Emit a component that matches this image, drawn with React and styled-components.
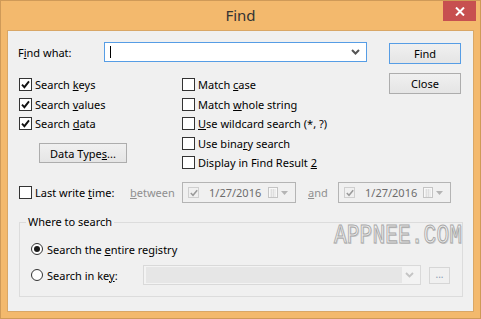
import React from 'react'
import styled, { createGlobalStyle } from 'styled-components'

const GlobalStyle = createGlobalStyle`
  html, body {
    margin: 0;
    padding: 0;
    background: #f3b96d;
  }
  body {
    font-family: 'Noto Sans', sans-serif;
    font-size: 11px;
    color: #000;
  }
  * {
    box-sizing: border-box;
  }
`

const Window = styled.div`
  width: 481px;
  height: 319px;
  background: #f3b96d;
  border: 1px solid #cf9a58;
  display: flex;
  flex-direction: column;
`

const TitleBar = styled.div`
  height: 29px;
  display: grid;
  grid-template-columns: 1fr auto 1fr;
  align-items: start;
`

const Title = styled.div`
  grid-column: 2;
  font-size: 15px;
  line-height: 29px;
  color: #333;
`

const CloseX = styled.div`
  grid-column: 3;
  justify-self: end;
  width: 33px;
  height: 20px;
  margin-right: 4px;
  background: #c75050;
  display: flex;
  align-items: center;
  justify-content: center;
`

const Client = styled.div`
  position: relative;
  margin: 0 6px;
  height: 282px;
  border: 1px solid #d9a766;
  background: #f0f0f0;
  padding: 11px 0 0 10px;
  display: flex;
  flex-direction: column;
`

const TopSection = styled.div`
  display: flex;
`

const MainCol = styled.div`
  width: 349px;
  display: flex;
  flex-direction: column;
`

const ButtonCol = styled.div`
  margin-left: 22px;
  padding-top: 1px;
  display: flex;
  flex-direction: column;
  gap: 9px;
`

const FindRow = styled.div`
  height: 20px;
  display: flex;
  align-items: center;
`

const FieldLabel = styled.span`
  width: ${p => p.w}px;
  margin-left: ${p => p.ml || 0}px;
  color: ${p => (p.disabled ? '#8f8f8f' : '#000')};
  white-space: nowrap;
  flex: none;
`

const TextInput = styled.div`
  width: 263px;
  height: 20px;
  border: 1px solid #569de5;
  background: #fff;
  display: flex;
  align-items: center;
  padding: 0 6px 0 5px;
`

const Caret = styled.span`
  width: 1px;
  height: 12px;
  background: #000;
`

const Chevron = styled.svg`
  margin-left: auto;
`

const OptionsGrid = styled.div`
  margin: 13px 0 0 1px;
  display: grid;
  grid-template-columns: 163px auto;
`

const OptionCol = styled.div`
  display: flex;
  flex-direction: column;
`

const CheckRow = styled.label`
  height: ${p => p.h || 19.5}px;
  display: flex;
  align-items: center;
  gap: 3px;
  white-space: nowrap;
  width: ${p => (p.w ? `${p.w}px` : 'auto')};
  flex: none;
`

const Box = styled.span`
  width: 13px;
  height: 13px;
  border: 1px solid #333;
  background: #fff;
  display: flex;
  align-items: center;
  justify-content: center;
  flex: none;
`

const Button = styled.button`
  width: ${p => p.w}px;
  height: ${p => p.h}px;
  margin: ${p => p.m || 0};
  padding: 0;
  border: 1px solid ${p => (p.primary ? '#569de5' : '#adadad')};
  background: linear-gradient(#f0f0f0, #e5e5e5);
  font: inherit;
  color: #000;
  flex: none;
`

const LastWriteRow = styled.div`
  margin: 9.5px 0 0 1px;
  height: 21px;
  display: flex;
  align-items: center;
`

const DateBox = styled.div`
  width: ${p => p.w}px;
  height: 21px;
  border: 1px solid #b4b4b4;
  background: #f0f0f0;
  display: flex;
  align-items: center;
  padding: 0 7px 0 5px;
  color: #6d6d6d;
  flex: none;
`

const MiniBox = styled.span`
  width: 11px;
  height: 11px;
  border: 1px solid #cfcfcf;
  display: flex;
  align-items: center;
  justify-content: center;
  margin-right: 10px;
`

const DateIcons = styled.span`
  margin-left: auto;
  display: flex;
  align-items: center;
  gap: 3px;
`

const GroupBox = styled.fieldset`
  margin: 11px 0 0 1px;
  width: 444px;
  border: 1px solid #dcdcdc;
  padding: 9px 0 11px 11px;
  min-width: 0;
`

const Legend = styled.legend`
  padding: 0 2px;
  margin-left: -5px;
  line-height: 16px;
`

const RadioRow = styled.div`
  height: 20px;
  margin-top: ${p => p.mt || 0}px;
  display: flex;
  align-items: center;
`

const RadioLabel = styled.label`
  width: ${p => (p.w ? `${p.w}px` : 'auto')};
  display: flex;
  align-items: center;
  gap: 4px;
  white-space: nowrap;
  flex: none;
`

const Circle = styled.span`
  width: 12px;
  height: 12px;
  border-radius: 50%;
  border: 1px solid #333;
  background: #fff;
  display: flex;
  align-items: center;
  justify-content: center;
  &::after {
    content: '';
    width: 6px;
    height: 6px;
    border-radius: 50%;
    background: ${p => (p.on ? '#1a1a1a' : 'transparent')};
  }
`

const KeyCombo = styled.div`
  width: 278px;
  height: 20px;
  border: 1px solid #d9d9d9;
  background: #f3f3f3;
  display: flex;
  align-items: center;
  padding: 1px 6px 1px 2px;
`

const ComboFill = styled.span`
  width: 256px;
  height: 100%;
  background: #e6e6e6;
`

const Dots = styled.div`
  width: 21px;
  height: 17px;
  margin-left: 8px;
  border: 1px solid #d6d6d6;
  background: #f0f0f0;
  color: #8a9ab0;
  font-size: 10px;
  line-height: 12px;
  text-align: center;
`

const Watermark = styled.div`
  position: absolute;
  left: 326px;
  top: 190px;
  font-family: 'Liberation Mono', monospace;
  font-size: 21px;
  letter-spacing: 0.2px;
  color: #f2f2f2;
  -webkit-text-stroke: 0.8px #a8a8a8;
  text-shadow: 1px 1px 0 #d0d0d0;
  transform: scaleY(1.3);
  transform-origin: top left;
  pointer-events: none;
`

const Check = ({ on, label, w, h }) => (
  <CheckRow w={w} h={h}>
    <Box>
      {on && (
        <svg width="9" height="9" viewBox="0 0 9 9">
          <path d="M1 4.6 L3.4 7.2 L8 1.4" fill="none" stroke="#111" strokeWidth="1.9" />
        </svg>
      )}
    </Box>
    <span>{label}</span>
  </CheckRow>
)

const DateField = ({ w }) => (
  <DateBox w={w}>
    <MiniBox>
      <svg width="8" height="8" viewBox="0 0 8 8">
        <path d="M0.8 4 L3 6.3 L7.2 1.2" fill="none" stroke="#9a9a9a" strokeWidth="1.5" />
      </svg>
    </MiniBox>
    1/27/2016
    <DateIcons>
      <svg width="10" height="11" viewBox="0 0 10 11">
        <rect x="0.5" y="0.5" width="9" height="10" fill="#f8f8f8" stroke="#c4c4c4" />
        <path d="M2 3h6M2 5h6M2 7h6M2 9h6M3.5 2v8M5.5 2v8" stroke="#dadada" strokeWidth="0.8" />
      </svg>
      <svg width="7" height="4" viewBox="0 0 7 4">
        <path d="M0 0 L7 0 L3.5 4 Z" fill="#b4b4b4" />
      </svg>
    </DateIcons>
  </DateBox>
)

const App = () => {
  return (
    <>
      <GlobalStyle />
      <Window>
        <TitleBar>
          <Title>Find</Title>
          <CloseX>
            <svg width="10" height="9" viewBox="0 0 10 9">
              <path d="M1 0.5 L9 8.5 M9 0.5 L1 8.5" stroke="#fff" strokeWidth="2" />
            </svg>
          </CloseX>
        </TitleBar>
        <Client>
          <TopSection>
            <MainCol>
              <FindRow>
                <FieldLabel w={86}>
                  F<u>i</u>nd what:
                </FieldLabel>
                <TextInput>
                  <Caret />
                  <Chevron width="9" height="6" viewBox="0 0 9 6">
                    <path d="M1 1 L4.5 4.5 L8 1" fill="none" stroke="#555" strokeWidth="2" />
                  </Chevron>
                </TextInput>
              </FindRow>
              <OptionsGrid>
                <OptionCol>
                  <Check on label={<>Search <u>k</u>eys</>} />
                  <Check on label={<>Search <u>v</u>alues</>} />
                  <Check on label={<>Search <u>d</u>ata</>} />
                  <Button w={88} h={20} m="9.5px 0 0 20px">
                    Data Type<u>s</u>...
                  </Button>
                </OptionCol>
                <OptionCol>
                  <Check label={<>Match <u>c</u>ase</>} />
                  <Check label={<>Match <u>w</u>hole string</>} />
                  <Check label={<><u>U</u>se wildcard search (*, ?)</>} />
                  <Check label={<>Use bina<u>r</u>y search</>} />
                  <Check label={<>Display in Find Result <u>2</u></>} />
                </OptionCol>
              </OptionsGrid>
            </MainCol>
            <ButtonCol>
              <Button w={72} h={21} primary>
                Find
              </Button>
              <Button w={72} h={21}>
                Close
              </Button>
            </ButtonCol>
          </TopSection>

          <LastWriteRow>
            <Check w={111} h={21} label={<>Last write <u>t</u>ime:</>} />
            <FieldLabel w={52} disabled>
              <u>b</u>etween
            </FieldLabel>
            <DateField w={114} />
            <FieldLabel w={30} ml={12} disabled>
              <u>a</u>nd
            </FieldLabel>
            <DateField w={113} />
          </LastWriteRow>

          <GroupBox>
            <Legend>Where to search</Legend>
            <RadioRow>
              <RadioLabel>
                <Circle on />
                <span>
                  Search the <u>e</u>ntire registry
                </span>
              </RadioLabel>
            </RadioRow>
            <RadioRow mt={6}>
              <RadioLabel w={112}>
                <Circle />
                <span>
                  Search in ke<u>y</u>:
                </span>
              </RadioLabel>
              <KeyCombo>
                <ComboFill />
                <Chevron width="9" height="6" viewBox="0 0 9 6">
                  <path d="M1 1 L4.5 4.5 L8 1" fill="none" stroke="#c4c4c4" strokeWidth="1.8" />
                </Chevron>
              </KeyCombo>
              <Dots>...</Dots>
            </RadioRow>
          </GroupBox>

          <Watermark>APPNEE.COM</Watermark>
        </Client>
      </Window>
    </>
  )
}

export default App
